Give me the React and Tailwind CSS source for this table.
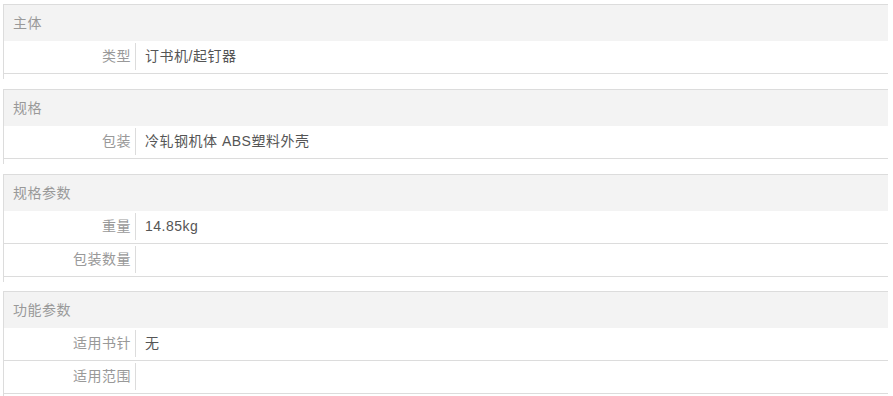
import React from "react";

const sections = [
  { title: "主体", rows: [["类型", "订书机/起钉器"]] },
  { title: "规格", rows: [["包装", "冷轧钢机体 ABS塑料外壳"]] },
  { title: "规格参数", rows: [["重量", "14.85kg"], ["包装数量", ""]] },
  { title: "功能参数", rows: [["适用书针", "无"], ["适用范围", ""]] },
];

export default function App() {
  return (
    <div
      className="w-[893px] h-[396px] overflow-hidden bg-white pt-[4px] pl-[3px] text-[14px] tracking-[0.5px]"
      style={{ fontFamily: '"Liberation Sans", Arial, "Noto Sans CJK SC", sans-serif' }}
    >
      {sections.map((s, i) => (
        <div
          key={s.title}
          className={`w-[885px] border-l border-t border-[#dcdcdc] pb-[5px] ${i === 2 ? "mb-[9px]" : "mb-[10px]"}`}
        >
          <div className="h-[36px] bg-[#f3f3f3] pl-[9px] flex items-center text-[#999]">{s.title}</div>
          {s.rows.map(([k, v]) => (
            <div key={k} className="flex h-[33px] border-b border-[#dcdcdc] pt-[2px] pb-[3px]">
              <div className="w-[127px] shrink-0 text-right text-[#999] flex items-center justify-end pb-[1px]">{k}</div>
              <div className="ml-[4px] border-l border-[#dcdcdc] pl-[9px] flex items-center text-[#555] pb-[1px]">{v}</div>
            </div>
          ))}
        </div>
      ))}
    </div>
  );
}
